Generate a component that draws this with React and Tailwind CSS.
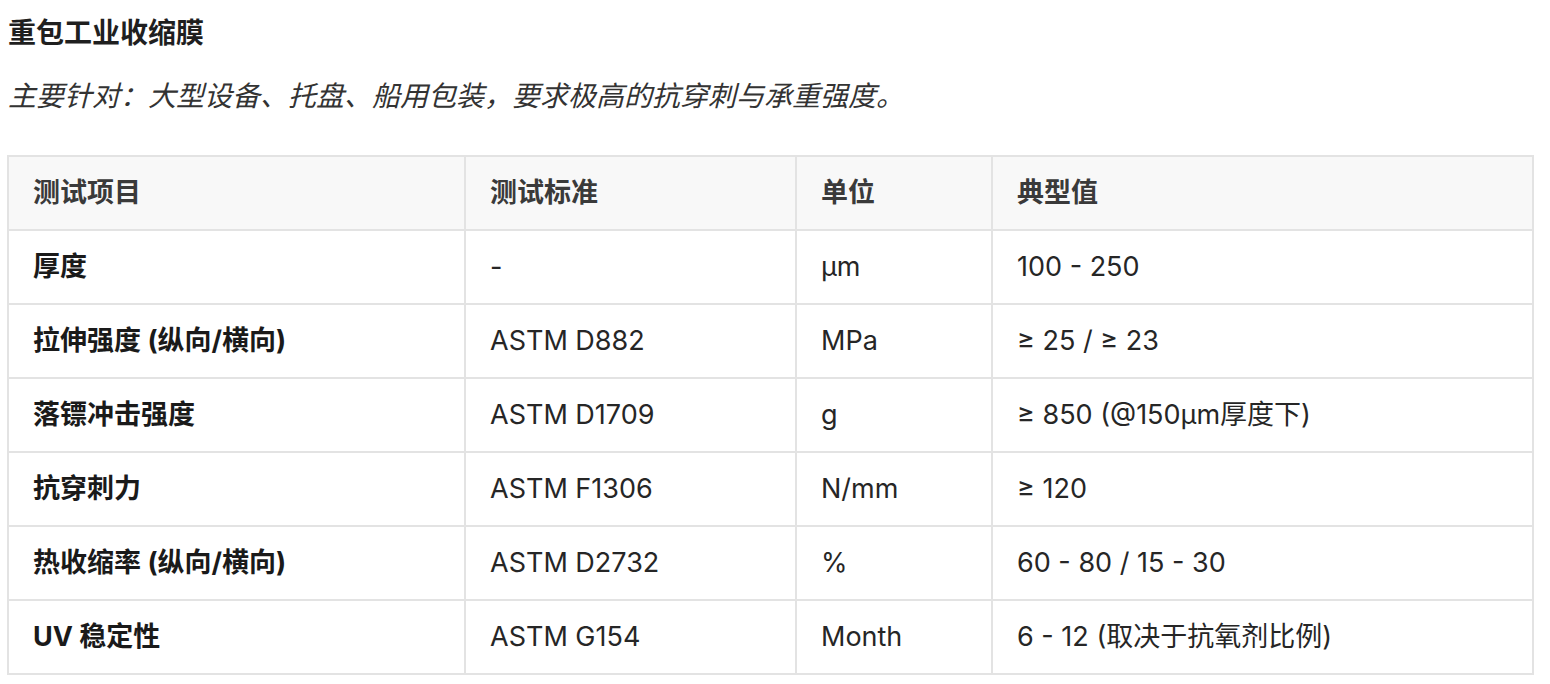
const rows = [
  ['厚度', '-', 'µm', '100 - 250'],
  ['拉伸强度 (纵向/横向)', 'ASTM D882', 'MPa', '≥ 25 / ≥ 23'],
  ['落镖冲击强度', 'ASTM D1709', 'g', '≥ 850 (@150µm厚度下)'],
  ['抗穿刺力', 'ASTM F1306', 'N/mm', '≥ 120'],
  ['热收缩率 (纵向/横向)', 'ASTM D2732', '%', '60 - 80 / 15 - 30'],
  ['UV 稳定性', 'ASTM G154', 'Month', '6 - 12 (取决于抗氧剂比例)'],
];

const headers = ['测试项目', '测试标准', '单位', '典型值'];

export default function App() {
  return (
    <div className="min-h-screen bg-white pl-[7px] pt-[12px] font-['Inter','Noto_Sans_CJK_SC',sans-serif]">
      <h3 className="pl-px text-[28px] font-bold leading-[42px] text-[#1f1f1f]">重包工业收缩膜</h3>
      <p className="mt-[22px] pl-px text-[28px] italic leading-[40px] text-[#333]">
        主要针对：大型设备、托盘、船用包装，要求极高的抗穿刺与承重强度。
      </p>
      <table className="mt-[39px] w-[1525px] table-fixed border-collapse text-[27px] leading-[36px]">
        <colgroup>
          <col className="w-[457px]" />
          <col className="w-[331px]" />
          <col className="w-[196px]" />
          <col className="w-[541px]" />
        </colgroup>
        <thead>
          <tr className="bg-[#f8f8f8]">
            {headers.map((h) => (
              <th
                key={h}
                className="border-2 border-[#e3e3e3] px-[24px] py-[18px] text-left font-bold text-[#3a3a3a]"
              >
                {h}
              </th>
            ))}
          </tr>
        </thead>
        <tbody>
          {rows.map((r) => (
            <tr key={r[0]}>
              {r.map((c, i) => (
                <td
                  key={i}
                  className={
                    i === 0
                      ? 'border-2 border-[#e3e3e3] px-[24px] py-[18px] font-bold text-[#1a1a1a]'
                      : 'border-2 border-[#e3e3e3] px-[24px] py-[18px] text-[#262626]'
                  }
                >
                  {c}
                </td>
              ))}
            </tr>
          ))}
        </tbody>
      </table>
    </div>
  );
}
